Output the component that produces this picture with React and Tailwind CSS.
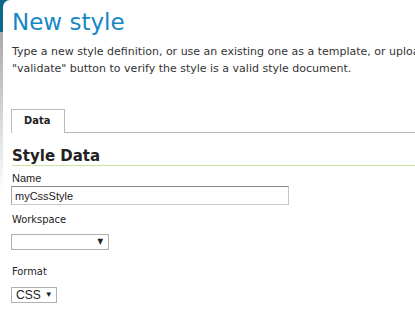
export default function App() {
  return (
    <div className="relative h-[318px] w-[415px] overflow-hidden bg-white">
      {/* left frame strip */}
      <div className="absolute left-0 top-0 h-full w-[3px] bg-gradient-to-b from-[#0b6a8a] from-[10%] via-[#a9a9a9] via-[10%] to-white to-[60%]" />
      <div className="absolute left-0 top-0 h-[8px] w-[10px] bg-[#0b6a8a]" />
      <div className="relative ml-[3px] min-h-full w-[700px] rounded-tl-[7px] bg-white pl-[9px] font-['DejaVu_Sans_Condensed','DejaVu_Sans',Verdana,sans-serif] text-[#222]">
        <h1 className="pt-[6px] font-['DejaVu_Sans',Verdana,sans-serif] text-[23px] leading-[32px] text-[#1488c3]">New style</h1>
        <p className="mt-[5px] whitespace-nowrap font-['DejaVu_Sans',Verdana,sans-serif] text-[11px] leading-[17px] text-[#333]">
          Type a new style definition, or use an existing one as a template, or upload an existing style from the file system. Use the
          <br />
          "validate" button to verify the style is a valid style document.
        </p>

        <div className="mt-[32px] flex items-end">
          <div className="-ml-[1px] flex h-[24px] w-[54px] items-center border border-b-0 border-[#b8b8b8] pl-[12px] text-[11px] font-bold text-[#222]">
            Data
          </div>
          <div className="h-px flex-1 bg-[#b8b8b8]" />
        </div>

        <h2 className="mt-[14px] font-['DejaVu_Sans',Verdana,sans-serif] text-[15px] font-bold leading-[18px] text-[#222]">Style Data</h2>
        <div className="h-px bg-[#c8e39c]" />

        <div className="mt-[5px] font-['Liberation_Sans',Arial,sans-serif] text-[11px] leading-[14px]">Name</div>
        <input
          className="-ml-[1px] mt-px block h-[19px] w-[278px] border border-[#c8c8c8] border-t-[#8a8a8a] border-l-[#a8a8a8] px-[3px] font-['Liberation_Sans',Arial,sans-serif] text-[11px] text-[#222] outline-none"
          defaultValue="myCssStyle"
          readOnly
        />

        <div className="mt-[8px] text-[11px] leading-[14px]">Workspace</div>
        <div className="-ml-[1px] mt-[7px] flex h-[16px] w-[98px] items-center justify-end border border-[#b0b0b0] pr-[5px] text-[8px] leading-none">
          ▼
        </div>

        <div className="mt-[15px] text-[11px] leading-[14px]">Format</div>
        <div className="-ml-[1px] mt-[8px] flex h-[16px] w-[46px] items-center border border-[#b0b0b0] pl-[4px] font-['Liberation_Sans',Arial,sans-serif] text-[12px] leading-none">
          CSS<span className="ml-[4px] text-[8px]">▼</span>
        </div>
      </div>
    </div>
  )
}
